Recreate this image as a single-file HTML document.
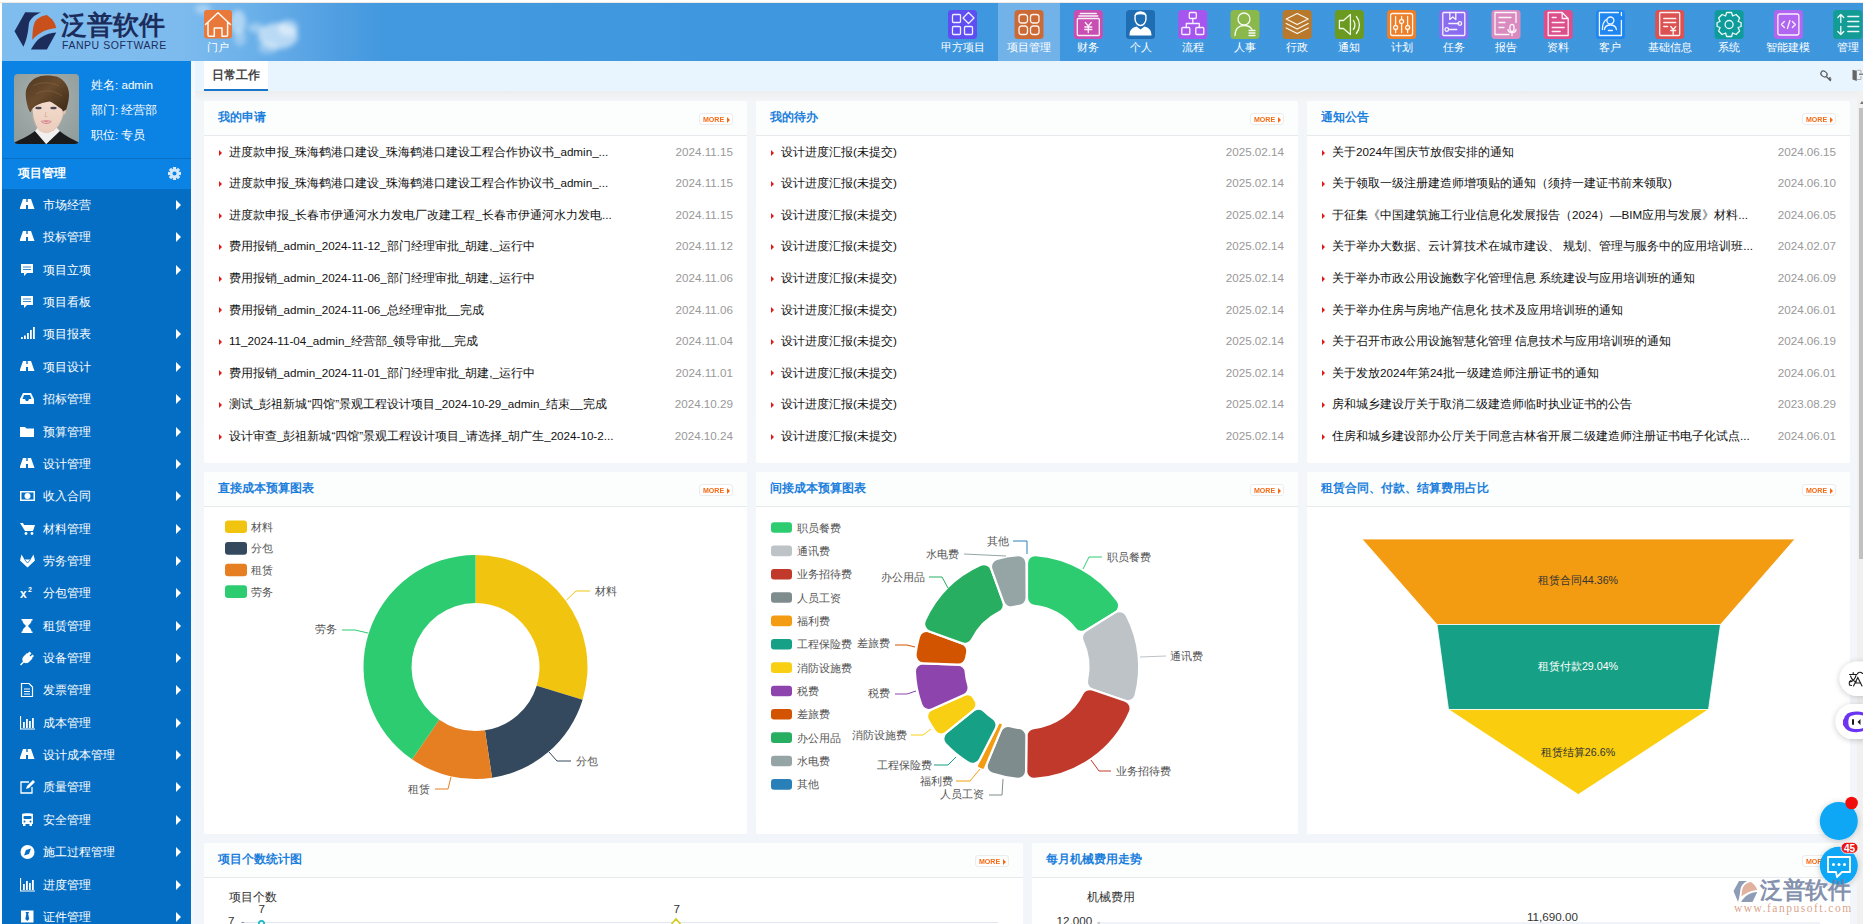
<!DOCTYPE html>
<html><head><meta charset="utf-8"><style>
*{margin:0;padding:0;box-sizing:border-box}
html,body{width:1863px;height:924px;overflow:hidden;background:#fff;font-family:"Liberation Sans",sans-serif;font-size:12px;color:#333}
.a{position:absolute}
#hdr{left:2px;top:3px;width:1861px;height:58px;background:linear-gradient(90deg,#80bdef 0px,#7dbbee 180px,#6ab0e9 250px,#529fe2 330px,#4399df 380px,#3f98df 700px,#3e96dd 1863px)}
#topline{left:0;top:2px;width:1863px;height:1px;background:#efe9e4}
#sb{left:2px;top:61px;width:189px;height:863px;background:#046ec4}
#prof{left:0;top:0;width:189px;height:97px;background:#0b83e4}
#sbh{left:0;top:97px;width:189px;height:31px;background:#0b83e4;border-top:1px solid #0a6fc0}
.mi{position:absolute;left:0;width:189px;height:32px;color:#fff;font-size:11.6px}
.mi .t{position:absolute;left:42.5px;top:0;line-height:32px}
.mi svg.ic{position:absolute;left:20px;top:9px}
.mi .ar{position:absolute;left:175.5px;top:11px;width:0;height:0;border-left:5px solid #fff;border-top:5px solid transparent;border-bottom:5px solid transparent}
#stripe{left:191px;top:61px;width:4px;height:863px;background:#f4f8fc}
#tabbar{left:195px;top:61px;width:1668px;height:30px;background:#e8f5fe}
#tab{left:204px;top:61px;width:64px;height:30px;background:#fff;border-bottom:2px solid #1a76c8;color:#444;font-size:11.65px;font-weight:bold;line-height:28px;text-align:center}
#cbg{left:195px;top:91px;width:1668px;height:833px;background:linear-gradient(180deg,#ecedee 0,#f0f2f4 6px,#f3f6f9 10px,#f2f6fa 100%)}
.pn{position:absolute;background:#fff;border-radius:2px;overflow:hidden}
.ph{position:absolute;left:0;top:0;right:0;height:35px;background:#fcfdfd;border-bottom:1px solid #e6eaed}
.ph .tt{position:absolute;left:14px;top:-1px;line-height:34px;color:#1b7fdc;font-size:11.65px;font-weight:bold}
.more{position:absolute;right:14px;top:12px;width:34px;height:12px;border:1px solid #ececec;border-radius:3px;background:#fff}
.more span{position:absolute;left:3px;top:1.9px;font-size:7.2px;line-height:8px;font-weight:bold;color:#f56a14;letter-spacing:0px;transform:scaleX(0.98);transform-origin:left}
.more i{position:absolute;left:26.6px;top:2.7px;width:0;height:0;border-left:3px solid #f56a14;border-top:3px solid transparent;border-bottom:3px solid transparent}
.li{position:absolute;left:0;right:0;height:31.55px;line-height:31.55px;font-size:11.65px;color:#111}
.li i{position:absolute;left:14.5px;top:13.8px;width:0;height:0;border-left:3.5px solid #e01818;border-top:3px solid transparent;border-bottom:3px solid transparent}
.li .x{position:absolute;left:25px;white-space:nowrap}
.li .d{position:absolute;right:14px;color:#999}
.nav{position:absolute;top:3px;height:58px;color:#fff;font-size:11px;text-align:center}
.nav .ib{position:absolute;top:7px;width:29px;height:29px;border-radius:4px}
.nav .lb{position:absolute;top:38px;left:0;right:0;line-height:14px;white-space:nowrap}
#logot{left:61px;top:8px;font-size:26px;line-height:34px;color:#1c2d5c;white-space:nowrap;letter-spacing:0px;font-weight:bold}
#logoe{left:62px;top:39px;font-size:10.5px;line-height:12px;color:#1c2d5c;letter-spacing:0.55px;white-space:nowrap}
.navl{top:40.5px;font-size:10.6px;line-height:12px;color:#fff;text-align:center;white-space:nowrap}
.sbt{left:91px;font-size:11.6px;line-height:15px;color:#fff;white-space:nowrap}
.cl{font-family:"Liberation Sans",sans-serif;font-size:10.7px;fill:#555}
.bl{font-family:"Liberation Sans",sans-serif;font-size:11.65px;fill:#333}
</style></head><body>
<div class="a" id="topline"></div>
<div class="a" id="hdr"></div>
<svg class="a" style="left:0;top:0" width="1863" height="62"><defs><radialGradient id="cl"><stop offset="0" stop-color="#fff" stop-opacity="0.85"/><stop offset="0.6" stop-color="#fff" stop-opacity="0.45"/><stop offset="1" stop-color="#fff" stop-opacity="0"/></radialGradient><filter id="bl" x="-50%" y="-50%" width="200%" height="200%"><feGaussianBlur stdDeviation="2.5"/></filter></defs><g filter="url(#bl)"><ellipse cx="203" cy="9" rx="8" ry="5" fill="#fff" opacity="0.35"/><ellipse cx="238" cy="22" rx="8" ry="12" fill="#fff" opacity="0.45"/><ellipse cx="240" cy="38" rx="6" ry="8" fill="#fff" opacity="0.3"/><ellipse cx="256" cy="28" rx="8" ry="5" fill="#fff" opacity="0.35"/><ellipse cx="278" cy="36" rx="20" ry="13" fill="#fff" opacity="0.55"/><ellipse cx="288" cy="28" rx="10" ry="8" fill="#fff" opacity="0.45"/><ellipse cx="268" cy="48" rx="10" ry="6" fill="#fff" opacity="0.3"/></g><path d="M14.5 31.2 L25.2 12.2 L41.1 12.4 C35 14.5 30.5 18.5 29.2 22.5 C28.2 26 28.6 36 23.4 46.8 Z" fill="#1c2d5c"/><path d="M32.2 39.9 C32.6 33 32.6 27.5 34.6 22.5 C36.5 18.6 41 16 46.9 15 L52.3 19.5 C54.2 22 55.4 24.5 56.3 27.9 C50 28.5 45 30 40.5 33 C37 35 34.5 37.5 32.2 39.9 Z" fill="#c94f1b"/><path d="M30.9 49.6 C33.5 45 36.5 40.5 40.5 37.8 C45 34.5 50.5 32.7 56.3 32.4 L46.9 49.6 Z" fill="#1c2d5c"/><rect x="204" y="10" width="28" height="28.5" rx="3" fill="#e8793a"/><path d="M205.5 24.5 L218 12.8 L230.5 24.5 M208 22.3 V35 Q208 36.3 209.3 36.3 H214.3 V28 H222 V36.3 H226.3 Q227.6 36.3 227.6 35 V22.3" fill="none" stroke="#fff" stroke-width="1.5" stroke-linejoin="round" stroke-linecap="round" opacity="0.95"/><rect x="948.0" y="10" width="29" height="29" rx="3.5" fill="#5f4ef2"/><g transform="translate(962.5,24.5)"><g fill="none" stroke="#fff" stroke-width="1.3" stroke-linecap="round" stroke-linejoin="round" opacity="0.92"><rect x="-10" y="-10" width="8" height="8" rx="1"/><path d="M6 -12 L11.5 -6.5 L6 -1 L0.5 -6.5 Z"/><rect x="-10" y="2" width="8" height="8" rx="1"/><rect x="2" y="2" width="8" height="8" rx="1"/></g></g><rect x="998.0" y="3" width="62" height="58" fill="#7ab6ea" opacity="0.85"/><rect x="1014.5" y="10" width="29" height="29" rx="3.5" fill="#cc6a36"/><g transform="translate(1029.0,24.5)"><g fill="none" stroke="#fff" stroke-width="1.3" stroke-linecap="round" stroke-linejoin="round" opacity="0.92"><rect x="-10" y="-10" width="8.5" height="8.5" rx="2.5"/><rect x="1.5" y="-10" width="8.5" height="8.5" rx="2.5"/><rect x="-10" y="1.5" width="8.5" height="8.5" rx="2.5"/><rect x="1.5" y="1.5" width="8.5" height="8.5" rx="2.5"/></g></g><rect x="1073.8" y="10" width="29" height="29" rx="3.5" fill="#c84fb1"/><g transform="translate(1088.3,24.5)"><g fill="none" stroke="#fff" stroke-width="1.3" stroke-linecap="round" stroke-linejoin="round" opacity="0.92"><path d="M-8 -11 H8 M-9.5 -8.5 H9.5"/><rect x="-11" y="-6" width="22" height="17" rx="1"/><path d="M-3 -2 L0 1.5 L3 -2 M0 1.5 V8 M-3.5 2.5 H3.5 M-3.5 5 H3.5"/></g></g><rect x="1126.0" y="10" width="29" height="29" rx="3.5" fill="#1f6db3"/><g transform="translate(1140.5,24.5)"><g fill="#fff"><path d="M-5.5 -6 C-6 -11 -3 -12.5 0 -12.5 C3 -12.5 6 -11 5.5 -6 C5.5 -2 3 1 0 1 C-3 1 -5.5 -2 -5.5 -6 Z" fill="none" stroke="#fff" stroke-width="1.4"/><path d="M-6 -8 C-4 -11 4 -11 6 -8 C6 -10.5 4 -12.5 0 -12.5 C-4 -12.5 -6 -10.5 -6 -8 Z"/><path d="M-11 11 C-11 5 -8 3 -4 2 L0 5 L4 2 C8 3 11 5 11 11 Z"/></g></g><rect x="1178.2" y="10" width="29" height="29" rx="3.5" fill="#a656ef"/><g transform="translate(1192.8,24.5)"><g fill="none" stroke="#fff" stroke-width="1.3" stroke-linecap="round" stroke-linejoin="round" opacity="0.92"><rect x="-3.5" y="-12" width="7" height="6" rx="1"/><path d="M0 -6 V-1 M-6.5 -1 H6.5 M-6.5 -1 V3 M6.5 -1 V3"/><rect x="-11" y="3" width="8" height="7" rx="1"/><rect x="3" y="3" width="8" height="7" rx="1"/></g></g><rect x="1230.5" y="10" width="29" height="29" rx="3.5" fill="#8bb84b"/><g transform="translate(1245.0,24.5)"><g fill="none" stroke="#fff" stroke-width="1.3" stroke-linecap="round" stroke-linejoin="round" opacity="0.92"><circle cx="-1" cy="-5.5" r="6"/><path d="M-10 11 C-10 4 -6 1 -1 1 C3 1 6 3 7 5"/><path d="M4 6 H10 M4 8.5 H10 M4 11 H10"/></g></g><rect x="1282.7" y="10" width="29" height="29" rx="3.5" fill="#b8792d"/><g transform="translate(1297.2,24.5)"><g fill="none" stroke="#fff" stroke-width="1.3" stroke-linecap="round" stroke-linejoin="round" opacity="0.92"><path d="M0 -11 L11 -5.5 L0 0 L-11 -5.5 Z M-11 -1 L0 4.5 L11 -1 M-11 3.5 L0 9 L11 3.5"/></g></g><rect x="1334.9" y="10" width="29" height="29" rx="3.5" fill="#6a9a20"/><g transform="translate(1349.4,24.5)"><g fill="none" stroke="#fff" stroke-width="1.3" stroke-linecap="round" stroke-linejoin="round" opacity="0.92"><path d="M-10 -4 H-6 L1 -10 V10 L-6 4 H-10 Z"/><path d="M4 -4 C6 -1 6 2 4 5 M7 -8 C11 -3 11 4 7 9"/></g></g><rect x="1387.1" y="10" width="29" height="29" rx="3.5" fill="#ee7f29"/><g transform="translate(1401.6,24.5)"><g fill="none" stroke="#fff" stroke-width="1.3" stroke-linecap="round" stroke-linejoin="round" opacity="0.92"><rect x="-11" y="-11" width="22" height="22" rx="2"/><path d="M-6 -8 V8 M0 -8 V8 M6 -8 V8"/><circle cx="-6" cy="3" r="2" fill="#ee7f29"/><circle cx="0" cy="-3" r="2" fill="#ee7f29"/><circle cx="6" cy="3" r="2" fill="#ee7f29"/></g></g><rect x="1439.3" y="10" width="29" height="29" rx="3.5" fill="#8a6cf0"/><g transform="translate(1453.8,24.5)"><g fill="none" stroke="#fff" stroke-width="1.3" stroke-linecap="round" stroke-linejoin="round" opacity="0.92"><rect x="-11" y="-12" width="22" height="23" rx="1"/><path d="M-4 -12 V-5 L-1 -7.5 L2 -5 V-12 M-5 -1 H5 M-5 5 H3"/><circle cx="6" cy="-1" r="1.8"/><circle cx="-7" cy="5" r="1.8"/></g></g><rect x="1491.5" y="10" width="29" height="29" rx="3.5" fill="#d98bc0"/><g transform="translate(1506.0,24.5)"><g fill="none" stroke="#fff" stroke-width="1.3" stroke-linecap="round" stroke-linejoin="round" opacity="0.92"><path d="M3 10 H-11 V-12 H10 V-2"/><path d="M-7 -7 H5 M-7 -2 H-1 M-7 3 H-2"/><rect x="4" y="0" width="4" height="7" rx="2"/><path d="M2 5 C2 9 10 9 10 5 M6 9 V11"/></g></g><rect x="1543.7" y="10" width="29" height="29" rx="3.5" fill="#dc4f8a"/><g transform="translate(1558.2,24.5)"><g fill="none" stroke="#fff" stroke-width="1.3" stroke-linecap="round" stroke-linejoin="round" opacity="0.92"><path d="M-10 -12 H4 L10 -6 V11 H-10 Z M4 -12 V-6 H10"/><path d="M-6 -7 H-2 M-6 -2 H6 M-6 3 H6 M-6 7 H2"/></g></g><rect x="1595.9" y="10" width="29" height="29" rx="3.5" fill="#1f86f0"/><g transform="translate(1610.4,24.5)"><g fill="none" stroke="#fff" stroke-width="1.3" stroke-linecap="round" stroke-linejoin="round" opacity="0.92"><path d="M8 -12 H-11 V11 H11 V-4 M11 -12 V-9"/><circle cx="0" cy="-4" r="3.5"/><path d="M-6 5 C-5 -1 5 -1 6 5 M-4 -5 C-7 -3 -8 1 -8 5 M-2 6 H2"/></g></g><rect x="1655.2" y="10" width="29" height="29" rx="3.5" fill="#dc5151"/><g transform="translate(1669.7,24.5)"><g fill="none" stroke="#fff" stroke-width="1.3" stroke-linecap="round" stroke-linejoin="round" opacity="0.92"><rect x="-10" y="-12" width="20" height="23" rx="1"/><path d="M-6 -6 H6 M-6 -2 H6 M-6 2 H-2 M1 2 L3.5 5 L6 2 M3.5 5 V10 M1 6 H6"/></g></g><rect x="1714.6" y="10" width="29" height="29" rx="3.5" fill="#0e9c9a"/><g transform="translate(1729.1,24.5)"><g fill="none" stroke="#fff" stroke-width="1.3" stroke-linecap="round" stroke-linejoin="round" opacity="0.92"><path d="M-2.5 -12 H2.5 L3.5 -8.5 L7 -10 L10.5 -6.5 L9 -3 L12 -2 V2 L9 3 L10.5 6.5 L7 10 L3.5 8.5 L2.5 12 H-2.5 L-3.5 8.5 L-7 10 L-10.5 6.5 L-9 3 L-12 2 V-2 L-9 -3 L-10.5 -6.5 L-7 -10 L-3.5 -8.5 Z"/><circle r="4"/></g></g><rect x="1773.9" y="10" width="29" height="29" rx="3.5" fill="#b066f1"/><g transform="translate(1788.4,24.5)"><g fill="none" stroke="#fff" stroke-width="1.3" stroke-linecap="round" stroke-linejoin="round" opacity="0.92" stroke-width="1.6"><rect x="-10.5" y="-10.5" width="21" height="21" rx="2"/><path d="M-4 -3 L-7 0 L-4 3 M4 -3 L7 0 L4 3 M1.5 -4 L-1 4"/></g></g><rect x="1833.2" y="10" width="29" height="29" rx="3.5" fill="#139c95"/><g transform="translate(1847.8,24.5)"><g fill="none" stroke="#fff" stroke-width="1.3" stroke-linecap="round" stroke-linejoin="round" opacity="0.92" stroke-width="1.6"><path d="M-7 -10 V-2 M-10 -7 L-7 -10 L-4 -7 M-7 2 V10 M-10 7 L-7 10 L-4 7 M0 -8 H11 M0 -3 H11 M0 2 H11 M0 7 H11"/></g></g></svg>
<div class="a" id="logot">泛普软件</div><div class="a" id="logoe">FANPU SOFTWARE</div><div class="a navl" style="left:178px;width:80px">门户</div>
<div class="a navl" style="left:922.5px;width:80px">甲方项目</div><div class="a navl" style="left:989.0px;width:80px">项目管理</div><div class="a navl" style="left:1048.3px;width:80px">财务</div><div class="a navl" style="left:1100.5px;width:80px">个人</div><div class="a navl" style="left:1152.8px;width:80px">流程</div><div class="a navl" style="left:1205.0px;width:80px">人事</div><div class="a navl" style="left:1257.2px;width:80px">行政</div><div class="a navl" style="left:1309.4px;width:80px">通知</div><div class="a navl" style="left:1361.6px;width:80px">计划</div><div class="a navl" style="left:1413.8px;width:80px">任务</div><div class="a navl" style="left:1466.0px;width:80px">报告</div><div class="a navl" style="left:1518.2px;width:80px">资料</div><div class="a navl" style="left:1570.4px;width:80px">客户</div><div class="a navl" style="left:1629.7px;width:80px">基础信息</div><div class="a navl" style="left:1689.1px;width:80px">系统</div><div class="a navl" style="left:1748.4px;width:80px">智能建模</div><div class="a navl" style="left:1807.8px;width:80px">管理</div>
<div class="a" id="sb"><div class="a" id="prof"></div><div class="a" id="sbh"></div></div>
<svg class="a" style="left:14px;top:74px" width="65" height="70" viewBox="0 0 65 70">
<defs><clipPath id="pc"><rect width="65" height="70" rx="4"/></clipPath>
<radialGradient id="pbg" cx="0.5" cy="0.4" r="0.7"><stop offset="0" stop-color="#aab3b1"/><stop offset="1" stop-color="#919d9b"/></radialGradient>
<linearGradient id="hr" x1="0" y1="0" x2="1" y2="1"><stop offset="0" stop-color="#4f3822"/><stop offset="0.45" stop-color="#6a4b2d"/><stop offset="1" stop-color="#3a2816"/></linearGradient>
<linearGradient id="sk" x1="0" y1="0" x2="0" y2="1"><stop offset="0" stop-color="#f3dccf"/><stop offset="1" stop-color="#ebcdbb"/></linearGradient></defs>
<g clip-path="url(#pc)">
<rect width="65" height="70" fill="url(#pbg)"/>
<path d="M0 68.5 C8 65 16 61 21 57 L32.2 70 L45.8 57 C50 61 58 65 65 68.5 V70 H0 Z" fill="#1b1a1c"/>
<path d="M21 57 L32.2 70 L45.8 57 L41 52 L25 52 Z" fill="#f2f0ef"/>
<path d="M24.2 46 L24.5 55 C27 59.5 38 59.5 41 55 L41 46 Z" fill="#e8c6b2"/>
<path d="M18.5 32 C18.5 26 24 25 33 25 C43 25 49 27 49.5 33 C50 46 43 58.6 32.2 58.6 C22 58.6 18.5 44 18.5 32 Z" fill="url(#sk)"/>
<ellipse cx="49.8" cy="37" rx="2" ry="3.5" fill="#e5c2ae"/>
<path d="M11.8 17.8 C12.5 13 16 7 21 4.2 C25 2 29 1.4 32.2 1.4 C36 1.4 40 1.8 42.6 2.6 C45 3.5 47.5 5 49 6.6 C51.5 9 53 11.5 53.8 13.8 C54.8 17 55.2 19.5 55 21.8 C54.8 25 54.5 27.5 53.8 29.8 C53.3 32 52.8 33.8 52.2 35.4 L49 37.5 C48.5 36 48.2 35.5 47.5 35 C45.5 33.5 44 32.5 42.6 31.4 C40 29.5 37.5 28 35.4 27.4 C33 28 30.5 28.5 28.2 29 C25.5 30 23 31 21 32.2 C19.5 33.5 18.5 34.5 17.8 35.4 L16.5 38.6 C14.5 36 13 31 12.2 26 C11.8 23 11.6 20.5 11.8 17.8 Z" fill="url(#hr)"/>
<path d="M19 12 C25 8 36 7.5 45 12 M22 20 C30 15 40 16 48 22" stroke="#8a6844" stroke-width="1" fill="none" opacity="0.55"/>
<ellipse cx="24.5" cy="34" rx="3.2" ry="1.3" fill="#4a4650"/><ellipse cx="39.5" cy="34" rx="3.2" ry="1.3" fill="#4a4650"/><path d="M18.5 41 C19 50 24 58.6 32.2 58.6 C40 58.6 45.5 50 49.5 41" fill="none" stroke="#dcb9a6" stroke-width="0.6" opacity="0.6"/>
<path d="M32 38 L31 42.5 L33.5 42.5" stroke="#d6ab98" stroke-width="0.8" fill="none"/>
<path d="M26.6 47 C29.5 46 35 46 37.8 47 C36 51 29 51 26.6 47 Z" fill="#d88b8e"/>
<path d="M27.8 47.3 C30.5 48.4 34 48.4 36.6 47.3 C35 48.9 29.5 48.9 27.8 47.3 Z" fill="#fff"/>
</g></svg>
<div class="a sbt" style="top:77px">姓名: admin</div><div class="a sbt" style="top:102px">部门: 经营部</div><div class="a sbt" style="top:127px">职位: 专员</div>
<div class="a" style="left:18px;top:165px;color:#fff;font-size:11.8px;font-weight:bold;line-height:16px">项目管理</div>
<svg class="a" style="left:167px;top:166px" width="15" height="15" viewBox="-7.5 -7.5 15 15"><g fill="#d6e8f8"><rect x="-1.6" y="-6.5" width="3.2" height="3.5" transform="rotate(0)"/><rect x="-1.6" y="-6.5" width="3.2" height="3.5" transform="rotate(45)"/><rect x="-1.6" y="-6.5" width="3.2" height="3.5" transform="rotate(90)"/><rect x="-1.6" y="-6.5" width="3.2" height="3.5" transform="rotate(135)"/><rect x="-1.6" y="-6.5" width="3.2" height="3.5" transform="rotate(180)"/><rect x="-1.6" y="-6.5" width="3.2" height="3.5" transform="rotate(225)"/><rect x="-1.6" y="-6.5" width="3.2" height="3.5" transform="rotate(270)"/><rect x="-1.6" y="-6.5" width="3.2" height="3.5" transform="rotate(315)"/><circle r="4.6"/></g><circle r="2" fill="#0b83e4"/></svg>
<div class="mi" style="top:189.00px"><svg class="ic" width="16" height="15" viewBox="0 0 16 15"><path d="M3 1 H6.3 V4 H7.7 V1 H11 L14.5 11 H8 V7 H6 V11 H-0.5 Z" fill="#fff"/></svg><span class="t">市场经营</span><span class="ar"></span></div>
<div class="mi" style="top:221.36px"><svg class="ic" width="16" height="15" viewBox="0 0 16 15"><path d="M3 1 H6.3 V4 H7.7 V1 H11 L14.5 11 H8 V7 H6 V11 H-0.5 Z" fill="#fff"/></svg><span class="t">投标管理</span><span class="ar"></span></div>
<div class="mi" style="top:253.72px"><svg class="ic" width="16" height="15" viewBox="0 0 16 15"><path d="M1 1 H13 V10 H7 L4 13 V10 H1 Z" fill="#fff"/><path d="M3 4 H11 M3 6.5 H11" stroke="#0670c6" stroke-width="0.8"/></svg><span class="t">项目立项</span><span class="ar"></span></div>
<div class="mi" style="top:286.08px"><svg class="ic" width="16" height="15" viewBox="0 0 16 15"><path d="M1 1 H13 V10 H7 L4 13 V10 H1 Z" fill="#fff"/><path d="M3 4 H11 M3 6.5 H11" stroke="#0670c6" stroke-width="0.8"/></svg><span class="t">项目看板</span></div>
<div class="mi" style="top:318.44px"><svg class="ic" width="16" height="15" viewBox="0 0 16 15"><g fill="#fff"><rect x="1" y="10" width="1.8" height="2"/><rect x="4" y="8.5" width="1.8" height="3.5"/><rect x="7" y="6" width="1.8" height="6"/><rect x="10" y="3" width="1.8" height="9"/><rect x="13" y="0" width="1.8" height="12"/></g></svg><span class="t">项目报表</span><span class="ar"></span></div>
<div class="mi" style="top:350.80px"><svg class="ic" width="16" height="15" viewBox="0 0 16 15"><path d="M3 1 H6.3 V4 H7.7 V1 H11 L14.5 11 H8 V7 H6 V11 H-0.5 Z" fill="#fff"/></svg><span class="t">项目设计</span><span class="ar"></span></div>
<div class="mi" style="top:383.16px"><svg class="ic" width="16" height="15" viewBox="0 0 16 15"><path d="M3 1 H11 L14 7 V12 H0 V7 Z" fill="#fff"/><path d="M2.5 7 H5 L6 9 H8 L9 7 H11.5 L10 3 H4 Z" fill="#0670c6"/></svg><span class="t">招标管理</span><span class="ar"></span></div>
<div class="mi" style="top:415.52px"><svg class="ic" width="16" height="15" viewBox="0 0 16 15"><path d="M0 2 H5 L6.5 3.5 H14 V12 H0 Z" fill="#fff"/></svg><span class="t">预算管理</span><span class="ar"></span></div>
<div class="mi" style="top:447.88px"><svg class="ic" width="16" height="15" viewBox="0 0 16 15"><path d="M3 1 H6.3 V4 H7.7 V1 H11 L14.5 11 H8 V7 H6 V11 H-0.5 Z" fill="#fff"/></svg><span class="t">设计管理</span><span class="ar"></span></div>
<div class="mi" style="top:480.24px"><svg class="ic" width="16" height="15" viewBox="0 0 16 15"><rect x="0" y="2" width="15" height="10" fill="#fff"/><rect x="1.5" y="3.5" width="12" height="7" fill="#0670c6"/><circle cx="7.5" cy="7" r="3" fill="#fff"/></svg><span class="t">收入合同</span><span class="ar"></span></div>
<div class="mi" style="top:512.60px"><svg class="ic" width="16" height="15" viewBox="0 0 16 15"><path d="M0 1 H3 L4 3 H15 L13 9 H5 Z" fill="#fff"/><circle cx="6" cy="11.5" r="1.4" fill="#fff"/><circle cx="12" cy="11.5" r="1.4" fill="#fff"/></svg><span class="t">材料管理</span><span class="ar"></span></div>
<div class="mi" style="top:544.96px"><svg class="ic" width="16" height="15" viewBox="0 0 16 15"><path d="M1.5 0.5 L4.5 5.5 H10.5 L13.5 0.5 L15 6.5 L7.5 13.5 L0 6.5 Z" fill="#fff"/><path d="M4.5 5.5 L7.5 9 L10.5 5.5" stroke="#0670c6" stroke-width="0.8" fill="none"/></svg><span class="t">劳务管理</span><span class="ar"></span></div>
<div class="mi" style="top:577.32px"><svg class="ic" width="16" height="15" viewBox="0 0 16 15"><text x="0" y="12" font-family="Liberation Sans" font-weight="bold" font-size="12" fill="#fff">x</text><text x="8" y="6" font-family="Liberation Sans" font-weight="bold" font-size="7" fill="#fff">2</text></svg><span class="t">分包管理</span><span class="ar"></span></div>
<div class="mi" style="top:609.68px"><svg class="ic" width="16" height="15" viewBox="0 0 16 15"><path d="M1.5 0 H12.5 V1.5 H11.5 C11.5 4.5 8.5 6 8 7 C8.5 8 11.5 9.5 11.5 12.5 H12.5 V14 H1.5 V12.5 H2.5 C2.5 9.5 5.5 8 6 7 C5.5 6 2.5 4.5 2.5 1.5 H1.5 Z" fill="#fff"/><path d="M4 1.5 H10 C10 3.5 7.5 5 7 5.5 C6.5 5 4 3.5 4 1.5 Z M4 12.5 C4 11 6.5 9.5 7 9 C7.5 9.5 10 11 10 12.5 Z" fill="#0670c6" opacity="0.0"/></svg><span class="t">租赁管理</span><span class="ar"></span></div>
<div class="mi" style="top:642.04px"><svg class="ic" width="16" height="15" viewBox="0 0 16 15"><path d="M10 1 L11.5 2.5 L9.5 4.5 L10.5 5.5 L12.5 3.5 L14 5 L12 7 L12.5 7.5 L9 11 C7.5 12.5 5 12.5 4 11.5 L1 14.5 L0 13.5 L3 10.5 C2 9.5 2 7 3.5 5.5 L7 2 L7.5 2.5 L9.5 0.5 Z" fill="#fff"/></svg><span class="t">设备管理</span><span class="ar"></span></div>
<div class="mi" style="top:674.40px"><svg class="ic" width="16" height="15" viewBox="0 0 16 15"><path d="M1.5 0.5 H9 L12.5 4 V13.5 H1.5 Z" fill="none" stroke="#fff" stroke-width="1.2"/><path d="M4 6 H10 M4 8.5 H10 M4 11 H10" stroke="#fff" stroke-width="1"/></svg><span class="t">发票管理</span><span class="ar"></span></div>
<div class="mi" style="top:706.76px"><svg class="ic" width="16" height="15" viewBox="0 0 16 15"><path d="M0.5 0 V13 H15" stroke="#fff" stroke-width="1.2" fill="none"/><g fill="#fff"><rect x="3" y="6" width="1.8" height="6"/><rect x="6" y="3" width="1.8" height="9"/><rect x="9" y="5" width="1.8" height="7"/><rect x="12" y="2" width="1.8" height="10"/></g></svg><span class="t">成本管理</span><span class="ar"></span></div>
<div class="mi" style="top:739.12px"><svg class="ic" width="16" height="15" viewBox="0 0 16 15"><path d="M3 1 H6.3 V4 H7.7 V1 H11 L14.5 11 H8 V7 H6 V11 H-0.5 Z" fill="#fff"/></svg><span class="t">设计成本管理</span><span class="ar"></span></div>
<div class="mi" style="top:771.48px"><svg class="ic" width="16" height="15" viewBox="0 0 16 15"><path d="M9 2 H1 V13 H12 V7" fill="none" stroke="#fff" stroke-width="1.3"/><path d="M6 9 L7 6 L13 0 L15 2 L9 8 Z" fill="#fff"/></svg><span class="t">质量管理</span><span class="ar"></span></div>
<div class="mi" style="top:803.84px"><svg class="ic" width="16" height="15" viewBox="0 0 16 15"><path d="M2 1 C2 0 13 0 13 1 V11 H2 Z" fill="#fff"/><rect x="3" y="10" width="2.5" height="3" fill="#fff"/><rect x="9.5" y="10" width="2.5" height="3" fill="#fff"/><rect x="3.5" y="3" width="8" height="3" rx="1" fill="#0670c6"/><circle cx="4.5" cy="8.5" r="1" fill="#0670c6"/><circle cx="10.5" cy="8.5" r="1" fill="#0670c6"/></svg><span class="t">安全管理</span><span class="ar"></span></div>
<div class="mi" style="top:836.20px"><svg class="ic" width="16" height="15" viewBox="0 0 16 15"><circle cx="7.5" cy="7" r="7" fill="#fff"/><path d="M11 3.5 L9 9 L4 10.5 L6 5 Z" fill="#0670c6"/></svg><span class="t">施工过程管理</span><span class="ar"></span></div>
<div class="mi" style="top:868.56px"><svg class="ic" width="16" height="15" viewBox="0 0 16 15"><path d="M0.5 0 V13 H15" stroke="#fff" stroke-width="1.2" fill="none"/><g fill="#fff"><rect x="3" y="6" width="1.8" height="6"/><rect x="6" y="3" width="1.8" height="9"/><rect x="9" y="5" width="1.8" height="7"/><rect x="12" y="2" width="1.8" height="10"/></g></svg><span class="t">进度管理</span><span class="ar"></span></div>
<div class="mi" style="top:900.92px"><svg class="ic" width="16" height="15" viewBox="0 0 16 15"><rect x="1" y="0.5" width="12.5" height="12" fill="#fff"/><path d="M5.5 2 H9 L8.2 4 L9.2 9 L7.25 11 L5.3 9 L6.3 4 Z" fill="#046ec4"/></svg><span class="t">证件管理</span><span class="ar"></span></div>
<div class="a" id="stripe"></div><div class="a" id="tabbar"></div><div class="a" id="tab">日常工作</div><div class="a" id="cbg"></div>
<svg class="a" style="left:1818px;top:66px" width="45" height="20" viewBox="1818 66 45 20">
<ellipse cx="1824" cy="74" rx="3.3" ry="2.6" transform="rotate(35 1824 74)" fill="none" stroke="#5a5a5a" stroke-width="1.2"/>
<path d="M1826.3 76.5 L1830.8 81 M1828.8 78.8 L1830.5 77.3 M1829.8 80 L1831.3 78.6" stroke="#5a5a5a" stroke-width="1.2" fill="none"/>
<path d="M1852.5 69.8 L1856.8 70.8 V81 L1852.5 79.5 Z" fill="#666"/>
<path d="M1856.8 70.3 H1861 V73 M1861 76 V79.5 H1856.8" fill="none" stroke="#aaa" stroke-width="0.9"/>
<path d="M1859 74.2 H1863" stroke="#666" stroke-width="1.2"/>
</svg>
<div class="a" style="left:1857px;top:91px;width:6px;height:833px;background:#f1f1f1"></div>
<div class="a" style="left:1859px;top:108px;width:4px;height:451px;background:#c1c1c1"></div>
<div class="a" style="left:1860px;top:101px;width:0;height:0;border-left:2px solid transparent;border-right:2px solid transparent;border-bottom:3px solid #777"></div>
<div class="pn" style="left:204px;top:101px;width:543px;height:362px"><div class="ph"><div class="tt">我的申请</div><div class="more"><span>MORE</span><i></i></div></div><div class="li" style="top:34.80px"><i></i><span class="x">进度款申报_珠海鹤港口建设_珠海鹤港口建设工程合作协议书_admin_...</span><span class="d">2024.11.15</span></div><div class="li" style="top:66.35px"><i></i><span class="x">进度款申报_珠海鹤港口建设_珠海鹤港口建设工程合作协议书_admin_...</span><span class="d">2024.11.15</span></div><div class="li" style="top:97.90px"><i></i><span class="x">进度款申报_长春市伊通河水力发电厂改建工程_长春市伊通河水力发电...</span><span class="d">2024.11.15</span></div><div class="li" style="top:129.45px"><i></i><span class="x">费用报销_admin_2024-11-12_部门经理审批_胡建,_运行中</span><span class="d">2024.11.12</span></div><div class="li" style="top:161.00px"><i></i><span class="x">费用报销_admin_2024-11-06_部门经理审批_胡建,_运行中</span><span class="d">2024.11.06</span></div><div class="li" style="top:192.55px"><i></i><span class="x">费用报销_admin_2024-11-06_总经理审批__完成</span><span class="d">2024.11.06</span></div><div class="li" style="top:224.10px"><i></i><span class="x">11_2024-11-04_admin_经营部_领导审批__完成</span><span class="d">2024.11.04</span></div><div class="li" style="top:255.65px"><i></i><span class="x">费用报销_admin_2024-11-01_部门经理审批_胡建,_运行中</span><span class="d">2024.11.01</span></div><div class="li" style="top:287.20px"><i></i><span class="x">测试_彭祖新城“四馆”景观工程设计项目_2024-10-29_admin_结束__完成</span><span class="d">2024.10.29</span></div><div class="li" style="top:318.75px"><i></i><span class="x">设计审查_彭祖新城“四馆”景观工程设计项目_请选择_胡广生_2024-10-2...</span><span class="d">2024.10.24</span></div></div>
<div class="pn" style="left:756px;top:101px;width:542px;height:362px"><div class="ph"><div class="tt">我的待办</div><div class="more"><span>MORE</span><i></i></div></div><div class="li" style="top:34.80px"><i></i><span class="x">设计进度汇报(未提交)</span><span class="d">2025.02.14</span></div><div class="li" style="top:66.35px"><i></i><span class="x">设计进度汇报(未提交)</span><span class="d">2025.02.14</span></div><div class="li" style="top:97.90px"><i></i><span class="x">设计进度汇报(未提交)</span><span class="d">2025.02.14</span></div><div class="li" style="top:129.45px"><i></i><span class="x">设计进度汇报(未提交)</span><span class="d">2025.02.14</span></div><div class="li" style="top:161.00px"><i></i><span class="x">设计进度汇报(未提交)</span><span class="d">2025.02.14</span></div><div class="li" style="top:192.55px"><i></i><span class="x">设计进度汇报(未提交)</span><span class="d">2025.02.14</span></div><div class="li" style="top:224.10px"><i></i><span class="x">设计进度汇报(未提交)</span><span class="d">2025.02.14</span></div><div class="li" style="top:255.65px"><i></i><span class="x">设计进度汇报(未提交)</span><span class="d">2025.02.14</span></div><div class="li" style="top:287.20px"><i></i><span class="x">设计进度汇报(未提交)</span><span class="d">2025.02.14</span></div><div class="li" style="top:318.75px"><i></i><span class="x">设计进度汇报(未提交)</span><span class="d">2025.02.14</span></div></div>
<div class="pn" style="left:1307px;top:101px;width:543px;height:362px"><div class="ph"><div class="tt">通知公告</div><div class="more"><span>MORE</span><i></i></div></div><div class="li" style="top:34.80px"><i></i><span class="x">关于2024年国庆节放假安排的通知</span><span class="d">2024.06.15</span></div><div class="li" style="top:66.35px"><i></i><span class="x">关于领取一级注册建造师增项贴的通知（须持一建证书前来领取)</span><span class="d">2024.06.10</span></div><div class="li" style="top:97.90px"><i></i><span class="x">于征集《中国建筑施工行业信息化发展报告（2024）—BIM应用与发展》材料...</span><span class="d">2024.06.05</span></div><div class="li" style="top:129.45px"><i></i><span class="x">关于举办大数据、云计算技术在城市建设、 规划、管理与服务中的应用培训班...</span><span class="d">2024.02.07</span></div><div class="li" style="top:161.00px"><i></i><span class="x">关于举办市政公用设施数字化管理信息 系统建设与应用培训班的通知</span><span class="d">2024.06.09</span></div><div class="li" style="top:192.55px"><i></i><span class="x">关于举办住房与房地产信息化 技术及应用培训班的通知</span><span class="d">2024.06.01</span></div><div class="li" style="top:224.10px"><i></i><span class="x">关于召开市政公用设施智慧化管理 信息技术与应用培训班的通知</span><span class="d">2024.06.19</span></div><div class="li" style="top:255.65px"><i></i><span class="x">关于发放2024年第24批一级建造师注册证书的通知</span><span class="d">2024.06.01</span></div><div class="li" style="top:287.20px"><i></i><span class="x">房和城乡建设厅关于取消二级建造师临时执业证书的公告</span><span class="d">2023.08.29</span></div><div class="li" style="top:318.75px"><i></i><span class="x">住房和城乡建设部办公厅关于同意吉林省开展二级建造师注册证书电子化试点...</span><span class="d">2024.06.01</span></div></div>
<div class="pn" style="left:204px;top:472px;width:543px;height:362px"><div class="ph"><div class="tt">直接成本预算图表</div><div class="more"><span>MORE</span><i></i></div></div></div>
<div class="pn" style="left:756px;top:472px;width:542px;height:362px"><div class="ph"><div class="tt">间接成本预算图表</div><div class="more"><span>MORE</span><i></i></div></div></div>
<div class="pn" style="left:1307px;top:472px;width:543px;height:362px"><div class="ph"><div class="tt">租赁合同、付款、结算费用占比</div><div class="more"><span>MORE</span><i></i></div></div></div>
<div class="pn" style="left:204px;top:843px;width:819px;height:157px"><div class="ph"><div class="tt">项目个数统计图</div><div class="more"><span>MORE</span><i></i></div></div></div>
<div class="pn" style="left:1032px;top:843px;width:818px;height:157px"><div class="ph"><div class="tt">每月机械费用走势</div><div class="more"><span>MORE</span><i></i></div></div></div>
<svg class="a" style="left:0;top:0" width="1863" height="924"><path d="M475.50 555.00 A112 112 0 0 1 582.61 699.75 L536.70 685.71 A64 64 0 0 0 475.50 603.00 Z" fill="#f1c40f"/><path d="M582.61 699.75 A112 112 0 0 1 492.05 777.77 L484.96 730.30 A64 64 0 0 0 536.70 685.71 Z" fill="#34495e"/><path d="M492.05 777.77 A112 112 0 0 1 412.06 759.30 L439.25 719.74 A64 64 0 0 0 484.96 730.30 Z" fill="#e67e22"/><path d="M412.06 759.30 A112 112 0 0 1 475.50 555.00 L475.50 603.00 A64 64 0 0 0 439.25 719.74 Z" fill="#2ecc71"/><rect x="225" y="520.5" width="22" height="12.6" rx="3" fill="#f1c40f"/><text x="251" y="530.8" class="cl">材料</text><rect x="225" y="542.1" width="22" height="12.6" rx="3" fill="#34495e"/><text x="251" y="552.4" class="cl">分包</text><rect x="225" y="563.7" width="22" height="12.6" rx="3" fill="#e67e22"/><text x="251" y="574.0" class="cl">租赁</text><rect x="225" y="585.3" width="22" height="12.6" rx="3" fill="#2ecc71"/><text x="251" y="595.5999999999999" class="cl">劳务</text><path d="M566.5 600 L576 591 H590" stroke="#f1c40f" fill="none"/><text x="595" y="595" class="cl">材料</text><path d="M549 752 L557 761 H571" stroke="#34495e" fill="none"/><text x="576" y="765" class="cl">分包</text><path d="M451 777 L448 789 H435" stroke="#e67e22" fill="none"/><text x="408" y="793" class="cl">租赁</text><path d="M368 633 L355 630 H342" stroke="#2ecc71" fill="none"/><text x="315" y="633" class="cl">劳务</text><path d="M1027.00 597.96 L1027.00 563.11 A8 8 0 0 1 1035.61 555.13 A112.2 112.2 0 0 1 1117.65 600.89 A8 8 0 0 1 1115.39 612.41 L1085.74 630.72 A8 8 0 0 1 1075.26 628.88 A61.5 61.5 0 0 0 1034.08 605.91 A8 8 0 0 1 1027.00 597.96 Z" fill="#2ecc71" stroke="#fff" stroke-width="2.2"/><path d="M1085.74 630.72 L1115.39 612.41 A8 8 0 0 1 1126.71 615.55 A112.2 112.2 0 0 1 1135.58 695.28 A8 8 0 0 1 1125.23 700.82 L1092.28 689.48 A8 8 0 0 1 1087.07 680.20 A61.5 61.5 0 0 0 1082.70 640.92 A8 8 0 0 1 1085.74 630.72 Z" fill="#bdc3c7" stroke="#fff" stroke-width="2.2"/><path d="M1092.28 689.48 L1125.23 700.82 A8 8 0 0 1 1129.97 711.57 A112.2 112.2 0 0 1 1034.64 778.94 A8 8 0 0 1 1026.09 770.89 L1026.40 736.04 A8 8 0 0 1 1033.55 728.15 A61.5 61.5 0 0 0 1082.46 693.58 A8 8 0 0 1 1092.28 689.48 Z" fill="#c0392b" stroke="#fff" stroke-width="2.2"/><path d="M1026.40 736.04 L1026.09 770.89 A8 8 0 0 1 1017.41 778.79 A112.2 112.2 0 0 1 992.15 773.65 A8 8 0 0 1 987.24 762.98 L1000.58 730.78 A8 8 0 0 1 1010.16 726.15 A61.5 61.5 0 0 0 1019.39 728.03 A8 8 0 0 1 1026.40 736.04 Z" fill="#7f8c8d" stroke="#fff" stroke-width="2.2"/><path d="M1002.64 725.81 L984.91 768.61 A2.195544865861048 2.195544865861048 0 0 1 982.00 769.78 A112.2 112.2 0 0 1 978.07 767.97 A2.195544865861048 2.195544865861048 0 0 1 977.07 765.00 L998.10 723.72 A2.195544865861048 2.195544865861048 0 0 1 1000.98 722.73 A61.5 61.5 0 0 0 1001.52 722.97 A2.195544865861048 2.195544865861048 0 0 1 1002.64 725.81 Z" fill="#f39c12" stroke="#fff" stroke-width="2.2"/><path d="M995.66 728.51 L979.83 759.57 A8 8 0 0 1 968.54 762.77 A112.2 112.2 0 0 1 945.48 744.10 A8 8 0 0 1 946.26 732.38 L973.35 710.45 A8 8 0 0 1 983.98 710.95 A61.5 61.5 0 0 0 992.96 718.22 A8 8 0 0 1 995.66 728.51 Z" fill="#16a085" stroke="#fff" stroke-width="2.2"/><path d="M973.82 710.06 L945.69 732.84 A7.318482886203494 7.318482886203494 0 0 1 935.09 731.35 A112.2 112.2 0 0 1 927.93 719.68 A7.318482886203494 7.318482886203494 0 0 1 931.42 709.56 L964.49 694.83 A7.318482886203494 7.318482886203494 0 0 1 973.80 697.85 A61.5 61.5 0 0 0 975.36 700.40 A7.318482886203494 7.318482886203494 0 0 1 973.82 710.06 Z" fill="#f9cf14" stroke="#fff" stroke-width="2.2"/><path d="M963.93 695.08 L932.09 709.26 A8 8 0 0 1 921.30 704.63 A112.2 112.2 0 0 1 914.90 671.70 A8 8 0 0 1 923.17 663.37 L958.00 664.59 A8 8 0 0 1 965.70 671.94 A61.5 61.5 0 0 0 968.31 685.38 A8 8 0 0 1 963.93 695.08 Z" fill="#8e44ad" stroke="#fff" stroke-width="2.2"/><path d="M958.00 664.59 L923.17 663.37 A8 8 0 0 1 915.50 654.49 A112.2 112.2 0 0 1 918.93 636.83 A8 8 0 0 1 929.37 631.47 L962.13 643.39 A8 8 0 0 1 967.17 652.76 A61.5 61.5 0 0 0 966.19 657.79 A8 8 0 0 1 958.00 664.59 Z" fill="#d35400" stroke="#fff" stroke-width="2.2"/><path d="M962.13 643.39 L929.37 631.47 A8 8 0 0 1 924.82 620.64 A112.2 112.2 0 0 1 980.64 564.82 A8 8 0 0 1 991.47 569.37 L1003.39 602.13 A8 8 0 0 1 999.45 612.01 A61.5 61.5 0 0 0 972.01 639.45 A8 8 0 0 1 962.13 643.39 Z" fill="#27ae60" stroke="#fff" stroke-width="2.2"/><path d="M1003.39 602.13 L991.47 569.37 A8 8 0 0 1 996.83 558.93 A112.2 112.2 0 0 1 1017.80 555.18 A8 8 0 0 1 1026.46 563.11 L1026.64 597.96 A8 8 0 0 1 1019.60 605.95 A61.5 61.5 0 0 0 1012.76 607.17 A8 8 0 0 1 1003.39 602.13 Z" fill="#95a5a6" stroke="#fff" stroke-width="2.2"/><rect x="771" y="522.2" width="21" height="10.6" rx="3" fill="#2ecc71"/><text x="797" y="531.5" class="cl">职员餐费</text><rect x="771" y="545.5500000000001" width="21" height="10.6" rx="3" fill="#bdc3c7"/><text x="797" y="554.85" class="cl">通讯费</text><rect x="771" y="568.9000000000001" width="21" height="10.6" rx="3" fill="#c0392b"/><text x="797" y="578.2" class="cl">业务招待费</text><rect x="771" y="592.25" width="21" height="10.6" rx="3" fill="#7f8c8d"/><text x="797" y="601.55" class="cl">人员工资</text><rect x="771" y="615.6" width="21" height="10.6" rx="3" fill="#f39c12"/><text x="797" y="624.9" class="cl">福利费</text><rect x="771" y="638.95" width="21" height="10.6" rx="3" fill="#16a085"/><text x="797" y="648.25" class="cl">工程保险费</text><rect x="771" y="662.3000000000001" width="21" height="10.6" rx="3" fill="#f9cf14"/><text x="797" y="671.6" class="cl">消防设施费</text><rect x="771" y="685.6500000000001" width="21" height="10.6" rx="3" fill="#8e44ad"/><text x="797" y="694.95" class="cl">税费</text><rect x="771" y="709.0" width="21" height="10.6" rx="3" fill="#d35400"/><text x="797" y="718.3" class="cl">差旅费</text><rect x="771" y="732.35" width="21" height="10.6" rx="3" fill="#27ae60"/><text x="797" y="741.65" class="cl">办公用品</text><rect x="771" y="755.7" width="21" height="10.6" rx="3" fill="#95a5a6"/><text x="797" y="765.0" class="cl">水电费</text><rect x="771" y="779.0500000000001" width="21" height="10.6" rx="3" fill="#2980b9"/><text x="797" y="788.35" class="cl">其他</text><path d="M1013 541 H1027 V554" stroke="#2980b9" fill="none"/><text x="987" y="545" class="cl">其他</text><path d="M964 554 L1006 556" stroke="#95a5a6" fill="none"/><text x="926" y="558" class="cl">水电费</text><path d="M1083 569 L1089 557 H1102" stroke="#2ecc71" fill="none"/><text x="1107" y="561" class="cl">职员餐费</text><path d="M929 577 H942 L948 588" stroke="#27ae60" fill="none"/><text x="881" y="581" class="cl">办公用品</text><path d="M1140 657 L1166 656" stroke="#bdc3c7" fill="none"/><text x="1170" y="660" class="cl">通讯费</text><path d="M895 645 H907 L915 647" stroke="#d35400" fill="none"/><text x="857" y="647" class="cl">差旅费</text><path d="M895 694 H907 L916 691" stroke="#8e44ad" fill="none"/><text x="868" y="697" class="cl">税费</text><path d="M911 735 H923 L931 729" stroke="#f9cf14" fill="none"/><text x="852" y="739" class="cl">消防设施费</text><path d="M934 765 H948 L956 757" stroke="#16a085" fill="none"/><text x="877" y="769" class="cl">工程保险费</text><path d="M956 781 H970 L980 769" stroke="#f39c12" fill="none"/><text x="920" y="785" class="cl">福利费</text><path d="M989 795 H1002 L1003 779" stroke="#7f8c8d" fill="none"/><text x="940" y="798" class="cl">人员工资</text><path d="M1091 760 L1099 771 H1111" stroke="#c0392b" fill="none"/><text x="1116" y="775" class="cl">业务招待费</text><polygon points="1362,539 1795,539 1720.5,624.5 1437,624.5" fill="#f39c12" stroke="#fff" stroke-width="0.8"/><polygon points="1437,624.5 1720.5,624.5 1708.5,709.5 1448.5,709.5" fill="#16a085" stroke="#fff" stroke-width="0.8"/><polygon points="1448.5,709.5 1708.5,709.5 1578.3,794.5" fill="#facd0f" stroke="#fff" stroke-width="0.8"/><text x="1578" y="584" class="cl" text-anchor="middle" style="fill:#333">租赁合同44.36%</text><text x="1578" y="670" class="cl" text-anchor="middle" style="fill:#fff">租赁付款29.04%</text><text x="1578" y="756" class="cl" text-anchor="middle" style="fill:#333">租赁结算26.6%</text><text x="228.5" y="901" class="bl">项目个数</text><text x="258.5" y="913" class="bl">7</text><text x="228" y="925.2" class="bl">7</text><path d="M241.5 922.5 H244" stroke="#6e7079" stroke-width="0.8"/><path d="M244 922.5 H998" stroke="#e0e6f1"/><circle cx="261.5" cy="923.5" r="2.6" fill="#fff" stroke="#1bb8c7" stroke-width="1.8"/><text x="673.5" y="913" class="bl">7</text><path d="M676 919 L680 923.5 L676 928 L672 923.5 Z" fill="#fff" stroke="#d4cb1a" stroke-width="1.6"/><text x="1086.5" y="901" class="bl">机械费用</text><text x="1056.5" y="924.5" class="bl">12,000</text><path d="M1097.5 923 H1100" stroke="#6e7079" stroke-width="0.8"/><path d="M1100 923 H1820" stroke="#e0e6f1"/><text x="1527" y="921" class="bl">11,690.00</text></svg>
<svg class="a" style="left:1700px;top:640px" width="163" height="284" viewBox="1700 640 163 284">
<defs>
<filter id="sh" x="-50%" y="-50%" width="200%" height="200%"><feGaussianBlur in="SourceAlpha" stdDeviation="3"/><feOffset dx="0" dy="1"/><feComponentTransfer><feFuncA type="linear" slope="0.22"/></feComponentTransfer><feMerge><feMergeNode/><feMergeNode in="SourceGraphic"/></feMerge></filter>
</defs>
<g filter="url(#sh)">
<path d="M1857 661.5 C1847.5 661.5 1839.6 669.5 1839.6 678.75 C1839.6 688 1847.5 696 1857 696 H1870 V661.5 Z" fill="#fff"/>
<path d="M1853 704 C1843 704 1835.5 712 1835.5 721.5 C1835.5 731 1843 739 1853 739 H1870 V704 Z" fill="#fff"/>
</g>
<g fill="none" stroke="#1a1a1a" stroke-width="1.1" stroke-linecap="round">
<path d="M1849.5 674.5 H1857 M1853.2 672.5 V674.5 M1850.5 676 C1852 680 1854 681.5 1856.5 682 M1856 675.5 C1855 679 1852.5 681.5 1849.5 682"/>
<path d="M1851 680.5 C1849.5 681 1849 683 1849.5 685 L1851.5 685.5"/>
<path d="M1853.5 686 L1857.8 677.5 L1862 686 M1855 683 H1860.5"/>
<path d="M1857.5 673.5 C1859 672 1861 672 1862.5 673.5"/>
</g>
<path d="M1846 715 C1850 711 1858 711 1863 712.5 V731 C1858 733 1850 732.5 1846 729 C1843 726 1843 718 1846 715 Z" fill="#6a35f2"/>
<path d="M1850 716.5 C1853 714.5 1860 714.5 1863 715.5 V728 C1860 729.5 1853 729.5 1850 727.5 C1847.8 725.5 1847.8 718.5 1850 716.5 Z" fill="#fff"/>
<rect x="1852" y="719" width="2" height="6" rx="1" fill="#1a1a1a"/><path d="M1860.5 719 V725 L1857.5 722 Z" fill="#1a1a1a"/>
<path d="M1845 717.5 L1843 720 V725 L1845 727.5 Z" fill="#7b2ff0"/>
<g filter="url(#sh)"><circle cx="1838.8" cy="821" r="19" fill="#0aa7f6"/></g>
<circle cx="1851.6" cy="803" r="6.3" fill="#f20d0d"/>
<g filter="url(#sh)"><circle cx="1838.8" cy="865.7" r="19" fill="#0aa7f6"/></g>
<path d="M1828 857 H1850 V872 H1842 L1837 877 L1836 872 H1828 Z" fill="none" stroke="#fff" stroke-width="1.8" stroke-linejoin="round"/>
<circle cx="1833.5" cy="864.5" r="1.5" fill="#fff"/><circle cx="1839" cy="864.5" r="1.5" fill="#fff"/><circle cx="1844.5" cy="864.5" r="1.5" fill="#fff"/>
<rect x="1841" y="842.3" width="17" height="11" rx="5.5" fill="#e8151b" stroke="#fff" stroke-width="0.8"/>
<text x="1849.5" y="851.5" text-anchor="middle" font-family="Liberation Sans" font-size="10" font-weight="bold" fill="#fff">45</text>
</svg>
<svg class="a" style="left:1730px;top:876px" width="133" height="40" viewBox="1730 876 133 40">
<g opacity="0.75">
<path d="M1733.5 891 L1739 881 L1747 881 C1743 883 1741 886 1740.5 889 C1740 892 1740 896 1738 902 Z" fill="#6a7c9e"/>
<path d="M1741.5 896.5 C1741.8 892 1742 889 1743.5 886.5 C1745 884 1748 882.5 1751 882 L1754 884.5 C1755.5 886 1756.5 888 1757.3 890 C1753 890.5 1749 891.5 1746 893.5 C1744 894.5 1742.5 895.5 1741.5 896.5 Z" fill="#d89a7e"/>
<path d="M1741 902 C1743 899 1745 896.5 1747.5 895 C1750.5 893 1754 892 1757.3 892 L1752.5 902 Z" fill="#6a7c9e"/>
</g>
</svg>
<div class="a" style="left:1760px;top:876px;font-size:23px;line-height:28px;color:rgba(110,126,160,0.85);white-space:nowrap;letter-spacing:-0.5px;font-weight:bold">泛普软件</div>
<div class="a" style="left:1734px;top:902px;font-family:'Liberation Serif',serif;font-size:11.5px;line-height:12px;color:rgba(214,150,122,0.9);white-space:nowrap;letter-spacing:1.5px">www.fanpusoft.com</div>
</body></html>
